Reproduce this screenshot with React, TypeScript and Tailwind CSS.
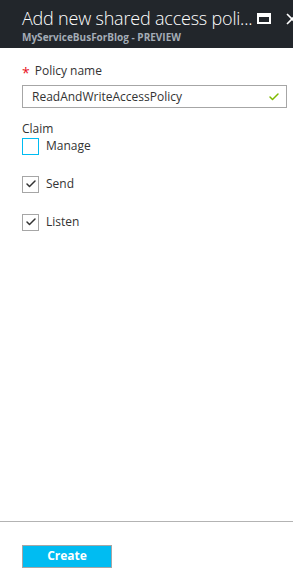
import { Check } from "lucide-react";

const claims = [
  { name: "Manage", checked: false, focused: true },
  { name: "Send", checked: true, focused: false },
  { name: "Listen", checked: true, focused: false },
];

const App = () => {
  return (
    <div
      className="w-[293px] h-[577px] bg-white flex flex-col overflow-hidden"
      style={{ fontFamily: "'Open Sans', 'Noto Sans', sans-serif" }}
    >
      <div className="h-[48px] bg-[#22262b] pl-[22px] pt-[6px] relative shrink-0 overflow-hidden">
        <div className="text-[18px] leading-[24px] text-white font-light whitespace-nowrap tracking-[-0.2px]">
          Add new shared access poli...
        </div>
        <div className="text-[10px] leading-[12px] font-bold text-[#a4acb6] mt-[1px]">
          MyServiceBusForBlog - PREVIEW
        </div>
        <div className="absolute left-[257px] top-[13px] w-[14px] h-[11px] border-2 border-t-[4px] border-white" />
        <svg className="absolute left-[286px] top-[13px]" width="12" height="12" viewBox="0 0 12 12">
          <path d="M1 1 L11 11 M11 1 L1 11" stroke="white" strokeWidth="1.6" />
        </svg>
      </div>

      <div className="flex-1 px-[22px] pt-[14px]">
        <div className="flex items-center text-[12px] text-[#333]">
          <span className="text-[#e81123] mr-[5px] text-[14px] leading-none mt-[3px]">*</span>
          Policy name
        </div>
        <div className="mt-[5px] h-[23px] w-[265px] border border-[#a6a6a6] flex items-center pl-[9px] pr-[6px] text-[12px] text-[#333]">
          <span className="flex-1">ReadAndWriteAccessPolicy</span>
          <Check size={12} strokeWidth={3} className="text-[#7fba00]" />
        </div>

        <div className="mt-[13px] text-[12px] text-[#333] leading-[16px]">Claim</div>
        <div className="flex flex-col gap-[22px] mt-[1px]">
          {claims.map((c) => (
            <label key={c.name} className="flex items-center gap-[7px] text-[12px] text-[#333] h-[16px]">
              <span
                className={`w-[17px] h-[17px] border flex items-center justify-center ${c.focused ? "border-[#00bcf2]" : "border-[#a6a6a6]"}`}
              >
                {c.checked && <Check size={12} strokeWidth={3} className="text-[#333]" />}
              </span>
              {c.name}
            </label>
          ))}
        </div>
      </div>

      <div className="h-[56px] border-t border-[#b3b3b3] shrink-0 px-[22px] pt-[20px]">
        <button className="w-[90px] h-[23px] bg-[#00bcf2] border border-[#a6a6a6] text-white text-[12px] font-bold leading-none">
          Create
        </button>
      </div>
    </div>
  );
};

export default App;
